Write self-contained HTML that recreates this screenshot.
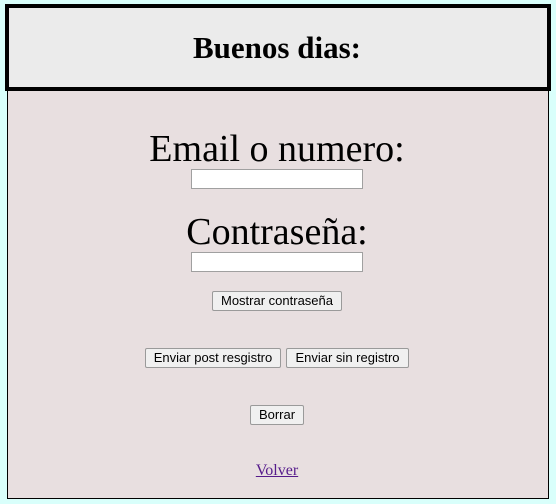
<!DOCTYPE html>
<html><head><meta charset="utf-8"><style>
html,body{margin:0;padding:0;width:556px;height:504px;background:#d9fffb;overflow:hidden;font-family:"Liberation Serif",serif;}
.hdr{position:absolute;left:5px;top:4px;width:538px;height:79px;border:4px solid #000;background:#ebebeb;}
.hdr h1{margin:0;text-align:center;font-size:31px;font-weight:bold;line-height:79px;padding-right:2px;}
.main{position:absolute;left:7px;top:91px;width:540px;height:407px;border:1px solid #000;border-top:none;background:#e8dfe0;}
.t{position:absolute;left:-1px;width:540px;text-align:center;font-size:38px;line-height:40px;}
.in{position:absolute;width:170px;height:18px;border:1px solid #a0a0a0;background:#fff;}
.b{position:absolute;height:20px;box-sizing:border-box;border:1px solid #9a9a9a;background:#f0f0f0;border-radius:2px;font-family:"Liberation Sans",sans-serif;font-size:13px;line-height:18px;text-align:center;color:#000;}
a{position:absolute;left:-1px;width:540px;text-align:center;color:#551a8b;font-size:16px;}
</style></head><body>
<div class="hdr"><h1>Buenos dias:</h1></div>
<div class="main">
<div class="t" style="top:38px">Email o numero:</div>
<div class="in" style="left:183px;top:78px"></div>
<div class="t" style="top:121px">Contraseña:</div>
<div class="in" style="left:183px;top:161px"></div>
<div class="b" style="left:204px;top:200px;width:130px">Mostrar contraseña</div>
<div class="b" style="left:137px;top:257px;width:136px">Enviar post resgistro</div>
<div class="b" style="left:278px;top:257px;width:123px">Enviar sin registro</div>
<div class="b" style="left:242px;top:314px;width:54px">Borrar</div>
<a style="top:371px"><u>Volver</u></a>
</div>
</body></html>
